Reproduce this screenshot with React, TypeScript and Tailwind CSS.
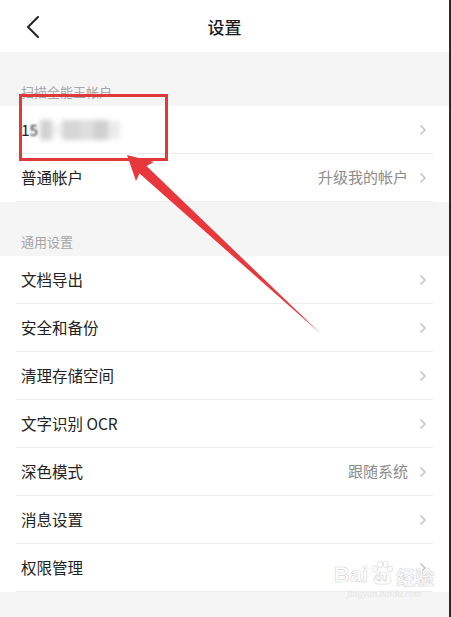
const FONT = { fontFamily: '"Noto Sans CJK SC", "Noto Sans", sans-serif' };

function Chevron() {
  return (
    <svg width="8" height="12" viewBox="0 0 8 12" className="shrink-0">
      <path d="M1.5 1.5 L6 6 L1.5 10.5" fill="none" stroke="#bdbdbd" strokeWidth="1.4" />
    </svg>
  );
}

function Row({ label, value, children }: { label?: string; value?: string; children?: React.ReactNode }) {
  return (
    <div className="bg-white px-[16px]">
      <div className="h-[48px] flex items-center justify-between border-b border-[#ececec] pl-[5px] pr-[6px]">
        {children ?? <span className="text-[15.5px] text-[#222]">{label}</span>}
        <div className="flex items-center gap-[11px]">
          {value && <span className="text-[15px] text-[#8c8c8c]">{value}</span>}
          <Chevron />
        </div>
      </div>
    </div>
  );
}

function SectionLabel({ text, h }: { text: string; h: string }) {
  return (
    <div className={`${h} flex items-end px-[21px] pb-[5px]`}>
      <span className="text-[13px] text-[#a6a6a6]">{text}</span>
    </div>
  );
}

function Watermark() {
  return (
    <div className="absolute left-[334px] top-[560px] flex flex-col items-center pointer-events-none select-none">
      <div className="flex items-end">
        <span
          className="text-[22px] leading-none font-bold text-white"
          style={{ fontFamily: '"Liberation Sans", sans-serif', WebkitTextStroke: '0.6px #d6d6d6' }}
        >
          Bai
        </span>
        <div className="relative w-[26px] h-[26px] mx-[1px]">
          <svg width="26" height="26" viewBox="0 0 26 26">
            <g fill="white" stroke="#d6d6d6" strokeWidth="0.7">
              <ellipse cx="6" cy="9" rx="2.6" ry="3.2" />
              <ellipse cx="11" cy="4.5" rx="2.6" ry="3.2" />
              <ellipse cx="16.5" cy="4.5" rx="2.6" ry="3.2" />
              <ellipse cx="21" cy="9" rx="2.6" ry="3.2" />
              <path d="M5 22 C5 15 9 12 13.5 12 C18 12 22 15 22 22 C22 25 5 25 5 22 Z" />
            </g>
          </svg>
          <span
            className="absolute left-[6px] top-[13px] text-[10px] leading-none font-bold text-white"
            style={{ fontFamily: '"Liberation Sans", sans-serif', WebkitTextStroke: '0.4px #d0d0d0' }}
          >
            du
          </span>
        </div>
        <span
          className="text-[19px] leading-none font-bold text-white"
          style={{ WebkitTextStroke: '0.6px #d6d6d6' }}
        >
          经验
        </span>
      </div>
      <span
        className="mt-[3px] text-[10px] leading-none italic text-[#e4e4e4]"
        style={{ fontFamily: '"Liberation Serif", serif' }}
      >
        jingyan.baidu.com
      </span>
    </div>
  );
}

export default function App() {
  return (
    <div className="relative w-[451px] h-[617px] overflow-hidden bg-[#f5f5f5] border-r-2 border-[#2a2a2a]" style={FONT}>
      {/* Header */}
      <div className="relative h-[52px] bg-white flex items-center justify-center">
        <svg width="14" height="24" viewBox="0 0 14 24" className="absolute left-[26px] top-[15px]">
          <path d="M12 2 L2 12 L12 22" fill="none" stroke="#222" strokeWidth="2" strokeLinecap="round" strokeLinejoin="round" />
        </svg>
        <span className="text-[17px] font-medium text-[#1a1a1a] mt-[1px]">设置</span>
      </div>

      <SectionLabel text="扫描全能王帐户" h="h-[54px]" />
      <Row>
        <div className="flex items-center">
          <span className="text-[15.5px] text-[#222]">1</span>
          <span className="text-[15.5px] text-[#222] blur-[1px]">5</span>
          <div className="flex items-center blur-[2.5px] ml-[2px]">
            <div className="w-[12px] h-[20px] bg-[#d2d2d2]" />
            <div className="w-[10px] h-[12px] bg-[#f2f2f2]" />
            <div className="w-[18px] h-[20px] bg-[#d6d6d6]" />
            <div className="w-[14px] h-[20px] bg-[#dedede]" />
            <div className="w-[14px] h-[20px] bg-[#d0d0d0]" />
            <div className="w-[12px] h-[18px] bg-[#ebebeb]" />
          </div>
        </div>
      </Row>
      <Row label="普通帐户" value="升级我的帐户" />

      <SectionLabel text="通用设置" h="h-[54px]" />
      <Row label="文档导出" />
      <Row label="安全和备份" />
      <Row label="清理存储空间" />
      <Row label="文字识别 OCR" />
      <Row label="深色模式" value="跟随系统" />
      <Row label="消息设置" />
      <Row label="权限管理" />

      {/* annotation: red box + arrow */}
      <div className="absolute left-[19px] top-[94px] w-[149px] h-[67px] border-[3px] border-[#e0393b]" />
      <svg className="absolute left-0 top-0 pointer-events-none" width="451" height="617" viewBox="0 0 451 617">
        <polygon
          points="127,155 154,162 146.5,166 321,334 139.5,173.5 136,181"
          fill="#e8383b"
        />
      </svg>

      <Watermark />
    </div>
  );
}
